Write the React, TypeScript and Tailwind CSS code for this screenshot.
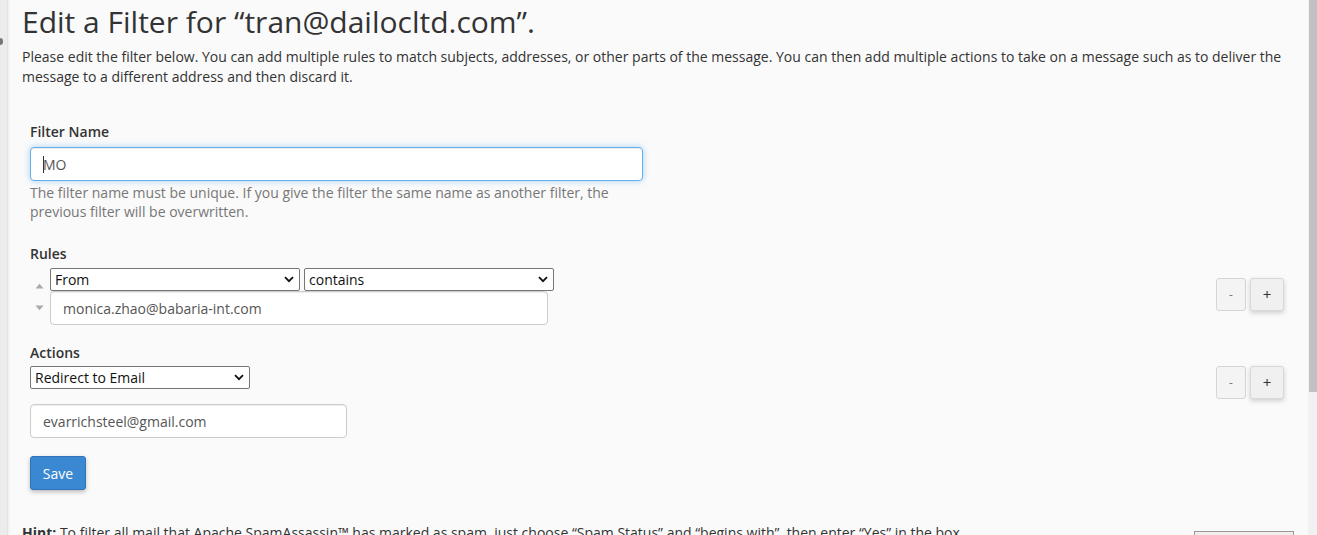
import React from 'react';

const font = { fontFamily: '"Open Sans", "Noto Sans", sans-serif' };

function Chevron() {
  return (
    <svg width="10" height="7" viewBox="0 0 10 7" className="shrink-0">
      <path d="M1 1.2 L5 5.2 L9 1.2" fill="none" stroke="#111" strokeWidth="1.8" />
    </svg>
  );
}

function FakeSelect({ label, width }: { label: string; width: string }) {
  return (
    <div
      className={`${width} h-[23px] flex items-center justify-between bg-white border border-[#767676] rounded-[2px] pl-[4px] pr-[5px] text-[14px] leading-[20px] text-[#111]`}
    >
      <span>{label}</span>
      <Chevron />
    </div>
  );
}

function TextBox({ value, width }: { value: string; width: string }) {
  return (
    <div
      className={`${width} h-[34px] flex items-center bg-white border border-[#ccc] rounded-[4px] px-[12px] text-[14px] text-[#555] shadow-[inset_0_1px_1px_rgba(0,0,0,0.075)]`}
    >
      {value}
    </div>
  );
}

function PlusMinus() {
  return (
    <div className="flex gap-[4px]">
      <button className="w-[30px] h-[33px] flex items-center justify-center bg-[#f4f4f4] border border-[#d4d4d4] rounded-[3px] text-[12px] text-[#777]">
        -
      </button>
      <button className="w-[34px] h-[33px] flex items-center justify-center bg-[#f0f0f0] border border-[#d8d8d8] rounded-[3px] text-[15px] text-[#333] shadow-[0_2px_5px_rgba(0,0,0,0.18)]">
        +
      </button>
    </div>
  );
}

export default function App() {
  return (
    <div className="flex h-[535px] w-full overflow-hidden bg-[#fafafa] text-[#333]" style={font}>
      {/* left rail */}
      <div className="relative w-[8px] shrink-0 bg-[#ececec] border-r border-[#e2e2e2] shadow-[1px_0_3px_rgba(0,0,0,0.06)]">
        <div className="absolute left-0 top-[38px] w-[3px] h-[7px] rounded-r-full bg-[#777]" />
      </div>

      {/* content */}
      <div className="flex-1 min-w-0 pl-[14px] pr-[14px]">
        <h1 className="mt-[5px] text-[30px] leading-[33px] font-normal text-[#333]">
          Edit a Filter for “tran@dailocltd.com”.
        </h1>
        <p className="mt-[9px] text-[14px] leading-[20px]">
          Please edit the filter below. You can add multiple rules to match subjects, addresses, or other parts of the
          message. You can then add multiple actions to take on a message such as to deliver the message to a different
          address and then discard it.
        </p>

        <div className="pl-[8px] pr-[10px]">
          {/* filter name */}
          <div className="mt-[35px] text-[14px] leading-[20px] font-semibold">Filter Name</div>
          <div className="mt-[5px] w-[613px] h-[34px] flex items-center bg-white border border-[#66afe9] rounded-[4px] px-[12px] text-[14px] text-[#555] shadow-[inset_0_1px_1px_rgba(0,0,0,0.075),0_0_6px_rgba(102,175,233,0.55)]">
            <span className="w-px h-[17px] bg-[#333] mr-[-1px]" />
            MO
          </div>
          <p className="mt-[2px] w-[613px] text-[14px] leading-[19px] text-[#777]">
            The filter name must be unique. If you give the filter the same name as another filter, the previous filter
            will be overwritten.
          </p>

          {/* rules */}
          <div className="mt-[23px] text-[14px] leading-[20px] font-semibold">Rules</div>
          <div className="mt-[4px] flex items-start">
            <div className="w-[20px] shrink-0 flex flex-col items-center pt-[15px] gap-[16px] pr-[2px]">
              <svg width="9" height="6" viewBox="0 0 9 6">
                <path d="M0.5 5.5 L4.5 0.8 L8.5 5.5 Z" fill="#aaa" />
              </svg>
              <svg width="9" height="6" viewBox="0 0 9 6">
                <path d="M0.5 0.5 L4.5 5.2 L8.5 0.5 Z" fill="#aaa" />
              </svg>
            </div>
            <div className="flex flex-col">
              <div className="flex gap-[4px]">
                <FakeSelect label="From" width="w-[250px]" />
                <FakeSelect label="contains" width="w-[250px]" />
              </div>
              <TextBox value="monica.zhao@babaria-int.com" width="w-[498px]" />
            </div>
            <div className="flex-1" />
            <div className="mt-[10px]">
              <PlusMinus />
            </div>
          </div>

          {/* actions */}
          <div className="mt-[18px] text-[14px] leading-[20px] font-semibold">Actions</div>
          <div className="mt-[3px] flex items-start">
            <div className="flex flex-col">
              <FakeSelect label="Redirect to Email" width="w-[220px]" />
              <div className="mt-[15px]">
                <TextBox value="evarrichsteel@gmail.com" width="w-[317px]" />
              </div>
            </div>
            <div className="flex-1" />
            <PlusMinus />
          </div>

          <button className="mt-[18px] w-[56px] h-[34px] flex items-center justify-center bg-[#3b88d2] border border-[#2f74b8] rounded-[3px] text-[14px] text-white shadow-[0_2px_4px_rgba(0,0,0,0.25)]">
            Save
          </button>
        </div>

        {/* hint */}
        <div className="mt-[33px] flex items-start justify-between">
          <p className="text-[14px] leading-[20px]">
            <span className="font-bold">Hint:</span> To filter all mail that Apache SpamAssassin™ has marked as spam,
            just choose “Spam Status” and “begins with”, then enter “Yes” in the box.
          </p>
          <div className="mt-[8px] w-[100px] h-[30px] shrink-0 bg-[#f2eeee] border border-[#999]" />
        </div>
      </div>

      {/* scrollbar */}
      <div className="w-[9px] shrink-0 bg-[#f1f1f1] flex flex-col items-end">
        <div className="w-[8px] h-[392px] bg-[#c1c1c1]" />
      </div>
    </div>
  );
}
